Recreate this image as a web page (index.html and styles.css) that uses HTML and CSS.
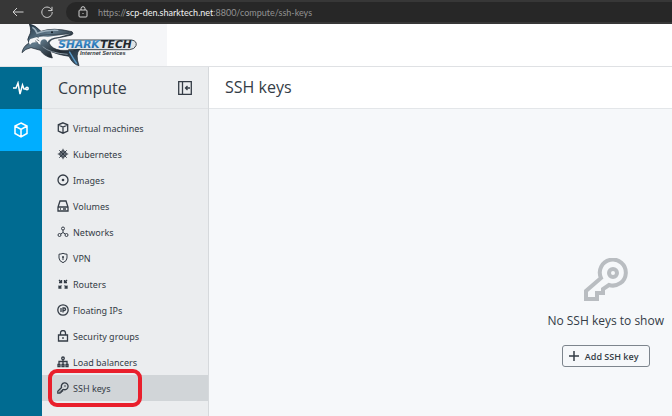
FILE: index.html
```html
<!DOCTYPE html>
<html lang="en">
<head>
<meta charset="utf-8">
<title>SSH keys</title>
<link rel="stylesheet" href="styles.css">
</head>
<body>
<div class="browser">
  <button class="nav-button" aria-label="Back"><svg width="12" height="10" viewBox="0 0 12 10"><path d="M11.5 5H1M5 1L1 5l4 4"/></svg></button>
  <button class="nav-button" aria-label="Refresh"><svg width="12" height="12" viewBox="0 0 12 12"><path d="M10.9 4.5A5.2 5.2 0 1 0 11.2 6M11 .8v3.8H7.2"/></svg></button>
  <div class="address">
    <svg width="10" height="12" viewBox="0 0 10 12"><rect x="1" y="4" width="8" height="7" rx="1"/><path d="M3 4V2.7a2 2 0 0 1 4 0V4M5 7v1"/></svg>
    <span>https://<b>scp-den.sharktech.net</b>:8800/compute/ssh-keys</span>
  </div>
</div>
<header class="brand">
  <a href="#" class="logo" aria-label="Sharktech Internet Services">
    <svg width="167" height="42" viewBox="0 12 501 126">
      <defs>
        <linearGradient id="skin" x1="0" y1="0" x2="1" y2="1"><stop offset="0" stop-color="#172b3b"/><stop offset=".35" stop-color="#60798a"/><stop offset=".65" stop-color="#20272e"/><stop offset="1" stop-color="#3e5e76"/></linearGradient>
        <linearGradient id="blue" x1="0" y1="0" x2="0" y2="1"><stop offset="0" stop-color="#4b9bd6"/><stop offset="1" stop-color="#125b9d"/></linearGradient>
      </defs>
      <path d="M175 60H395Q412 63 408 77Q404 88 388 89H205" fill="#dfe3e6" stroke="#3b444b" stroke-width="3"/>
      <path d="M88 12Q106 15 123 34Q158 21 216 35Q222 40 215 45L178 53Q150 56 147 69Q155 87 182 91Q208 93 239 88Q225 103 237 137Q219 134 207 109Q175 105 151 94L157 114Q133 110 121 91L93 83Q76 86 66 98Q69 79 87 69Q79 59 88 46Q96 34 88 12Z" fill="url(#skin)" stroke="#15202a" stroke-width="2"/>
      <path d="M91 57Q112 47 144 50L178 46L210 41L177 51Q150 52 142 67Q140 58 132 58Q120 59 121 74L110 67Q96 65 90 74Q83 66 91 57Z" fill="#f4f5f6"/>
      <path d="M118 47Q143 42 168 44L205 41M110 58L118 63M105 62L114 69M109 49L117 54" fill="none" stroke="#35434e" stroke-width="2"/>
      <path d="M97 22Q109 29 111 40Q139 29 175 31" fill="none" stroke="#9db0bd" stroke-width="4"/>
      <path d="M208 95Q220 116 230 131" fill="none" stroke="#5999c8" stroke-width="4"/>
      <path d="M128 80Q148 99 203 103" fill="none" stroke="#8997a2" stroke-width="3"/>
      <circle cx="156" cy="37" r="3" fill="#101820"/>
      <text x="175" y="85" class="logo-name" fill="url(#blue)">SHARK</text>
      <text x="301" y="85" class="logo-name" fill="#20272e">TECH</text>
      <text x="240" y="105" class="logo-tagline">Internet Services</text>
    </svg>
  </a>
</header>
<div class="app">
  <nav class="rail" aria-label="Sections">
    <a href="#" aria-label="Dashboard"><svg width="16" height="14" viewBox="0 0 16 14"><path d="M0 7h3l2-5 2 11 2.500-9L11 8h2"/><circle cx="14" cy="7.500" r="1.200"/></svg></a>
    <a href="#" class="current" aria-label="Compute"><svg width="16" height="16" viewBox="0 0 16 16"><path d="M8 1l6 3v7.500L8 15l-6-3.500V4zM2 4l6 3.500L14 4M8 7.500V15"/></svg></a>
  </nav>
  <aside class="sidebar">
    <div class="sidebar-head">
      <h2>Compute</h2>
      <button class="collapse" aria-label="Collapse sidebar"><svg width="14" height="14" viewBox="0 0 14 14"><path d="M.700.700h12.600v12.600H.700zM4.500 1v12M12 7H7.500M9.500 5L7.500 7l2 2"/></svg></button>
    </div>
    <ul class="menu">
      <li><a href="#"><svg viewBox="0 0 12 12"><path d="M6 .800l4.700 2v6.200L6 11.200 1.300 9V2.800zM1.300 3L6 5l4.700-2M6 5v6"/></svg>Virtual machines</a></li>
      <li><a href="#"><svg class="fine" viewBox="0 0 12 12"><circle cx="6" cy="6" r="3.300" fill="#9aa4ac"/><path d="M6 .800v10.400M.800 6h10.400M2.300 2.300l7.400 7.400M9.700 2.300L2.300 9.700"/></svg>Kubernetes</a></li>
      <li><a href="#"><svg viewBox="0 0 12 12"><circle cx="6" cy="6" r="5"/><circle class="dot" cx="6" cy="6" r="1.300"/></svg>Images</a></li>
      <li><a href="#"><svg viewBox="0 0 12 12"><path d="M3 1h6l2 6v4H1V7zM1 7h10M3 9h1M6 9h3"/></svg>Volumes</a></li>
      <li><a href="#"><svg class="fine" viewBox="0 0 12 12"><circle cx="6" cy="2.500" r="1.500"/><circle cx="2.500" cy="9" r="1.500"/><circle cx="9.500" cy="9" r="1.500"/><path d="M6 4v2.500L3.700 8M6 6.500L8.300 8"/></svg>Networks</a></li>
      <li><a href="#"><svg class="fine" viewBox="0 0 12 12"><path d="M2 2.200Q4 2.200 6 1.300Q8 2.200 10 2.200V6Q10 9 6 10.700Q2 9 2 6zM6 5v3"/><circle class="dot" cx="6" cy="5" r="1"/></svg>VPN</a></li>
      <li><a href="#"><svg viewBox="0 0 12 12"><path d="M2 2l2.500 2.500M4.500 2v2.500H2M10 2L7.500 4.500M7.500 2v2.500H10M4.500 7.500L2 10M2 7.500V10h2.500M7.500 7.500L10 10M7.500 10H10V7.500"/></svg>Routers</a></li>
      <li><a href="#"><svg viewBox="0 0 12 12"><circle cx="6" cy="6" r="5.200"/><path d="M4 4v4M6 8.500V4h1.300a1.200 1.200 0 0 1 0 2.500H6"/></svg>Floating IPs</a></li>
      <li><a href="#"><svg viewBox="0 0 12 12"><path d="M1.500 5h9v6h-9zM3.500 5V3a2.500 2.500 0 0 1 5 0v2M6 7v2"/></svg>Security groups</a></li>
      <li><a href="#"><svg viewBox="0 0 12 12"><circle cx="6" cy="2.300" r="1.300"/><path d="M6 4v4M2 8V5.500h8V8M1 8.500h2v2H1zM5 8.500h2v2H5zM9 8.500h2v2H9z"/></svg>Load balancers</a></li>
      <li class="selected"><a href="#" aria-current="page"><svg viewBox="0 0 12 12"><path d="M4.500 5.500A3.400 3.400 0 1 1 6.500 7.500L5.500 8v1H4.300v1.200H3v1H.800V9.200z"/><circle class="dot" cx="8" cy="4" r=".8"/></svg>SSH keys</a><span class="marker"></span></li>
    </ul>
  </aside>
  <main class="content">
    <h1>SSH keys</h1>
    <section class="empty">
      <svg width="44" height="44" viewBox="0 0 44 44"><path d="M17 20A13 13 0 1 1 25 27L19 31V35H13V41H2V33Z"/><circle cx="29" cy="15" r="4"/></svg>
      <p>No SSH keys to show</p>
      <button class="add"><svg width="10" height="10" viewBox="0 0 10 10"><path d="M5 0v10M0 5h10"/></svg>Add SSH key</button>
    </section>
  </main>
</div>
</body>
</html>
```
FILE: styles.css
```css
* {
  box-sizing: border-box;
}

body {
  margin: 0;
  min-height: 100vh;
  display: flex;
  flex-direction: column;
  overflow: hidden;
  background: #f6f8fa;
  color: #343c46;
  font-family: "Open Sans", "Noto Sans", sans-serif;
  font-size: 10px;
}

button {
  padding: 0;
  border: 0;
  background: none;
  color: inherit;
  font: inherit;
}

a {
  color: inherit;
  text-decoration: none;
}

svg {
  display: block;
  flex: none;
  fill: none;
  stroke: currentColor;
}

h1, h2, p, ul {
  margin: 0;
  padding: 0;
  font-weight: 400;
}

.browser {
  display: flex;
  align-items: center;
  gap: 17px;
  height: 24px;
  padding-left: 12px;
  background: #373737;
  color: #d2d2d2;
}

.nav-button {
  flex: none;
}

.address {
  display: flex;
  flex: 1;
  align-items: center;
  gap: 10px;
  height: 20px;
  padding-left: 12px;
  margin-left: -4px;
  border-radius: 10px 0 0 10px;
  background: #272727;
  color: #929292;
  font-family: Lato, "Open Sans", sans-serif;
  font-size: 9px;
  white-space: nowrap;
}

.address svg {
  color: #d2d2d2;
}

.address b {
  color: #f2f2f2;
  font-weight: 400;
}

.brand {
  height: 43px;
  border-bottom: 1px solid #dfe1e4;
  background: #fff;
}

.logo {
  display: block;
  width: 167px;
  height: 42px;
  background: #f5f6f8;
}

.logo svg {
  stroke: none;
}

.logo-name {
  font: italic 700 32px "DejaVu Sans", sans-serif;
}

.logo-tagline {
  fill: #343a40;
  font: italic 700 17px "Liberation Sans", sans-serif;
}

.app {
  display: flex;
  flex: 1;
}

.rail {
  flex: none;
  width: 42px;
  background: #006b91;
  color: #fff;
}

.rail a {
  display: grid;
  place-items: center;
  height: 42px;
}

.rail svg {
  stroke-width: 1.5;
}

.rail .current {
  background: #00aeff;
}

.sidebar {
  flex: none;
  width: 167px;
  border-right: 1px solid #d6d9dc;
  background: #ebedef;
}

.sidebar-head {
  display: flex;
  align-items: center;
  justify-content: space-between;
  height: 42px;
  padding: 0 16px;
  border-bottom: 1px solid #dfe1e4;
}

.collapse svg {
  stroke-width: 1.3;
}

h1, h2 {
  font-size: 16px;
  line-height: 24px;
}

.menu {
  padding-top: 6px;
  font-family: "Noto Sans", "Open Sans", sans-serif;
  font-size: 9px;
  list-style: none;
}

.menu li {
  position: relative;
}

.menu a {
  display: flex;
  align-items: center;
  gap: 4px;
  height: 26px;
  padding-left: 15px;
}

.menu svg {
  width: 12px;
  height: 12px;
  stroke-width: 1.3;
}

.menu .fine {
  stroke-width: 1;
}

.menu .dot {
  fill: currentColor;
  stroke: none;
}

.selected {
  background: #d1d5d8;
}

.marker {
  position: absolute;
  inset: -6px 66px -6px 6px;
  border: 4px solid #e91f2c;
  border-radius: 9px;
  pointer-events: none;
}

.content {
  display: flex;
  flex: 1;
  flex-direction: column;
  min-width: 0;
}

.content h1 {
  height: 42px;
  padding: 8px 16px;
  border-bottom: 1px solid #e3e6e9;
  background: #fff;
}

.empty {
  display: flex;
  flex-direction: column;
  align-items: center;
  align-self: flex-end;
  padding: 149px 8px 0 0;
}

.empty > svg {
  color: #b9bdc1;
  stroke-width: 4;
}

.empty p {
  margin: 10px 0 15px;
  font-size: 12px;
  line-height: 18px;
}

.add {
  display: flex;
  align-items: center;
  gap: 6px;
  height: 22px;
  padding: 0 10px 0 6px;
  border: 1px solid #7d858d;
  border-radius: 3px;
  font-size: 9px;
  font-weight: 600;
}

.add svg {
  stroke-width: 1.5;
}
```
